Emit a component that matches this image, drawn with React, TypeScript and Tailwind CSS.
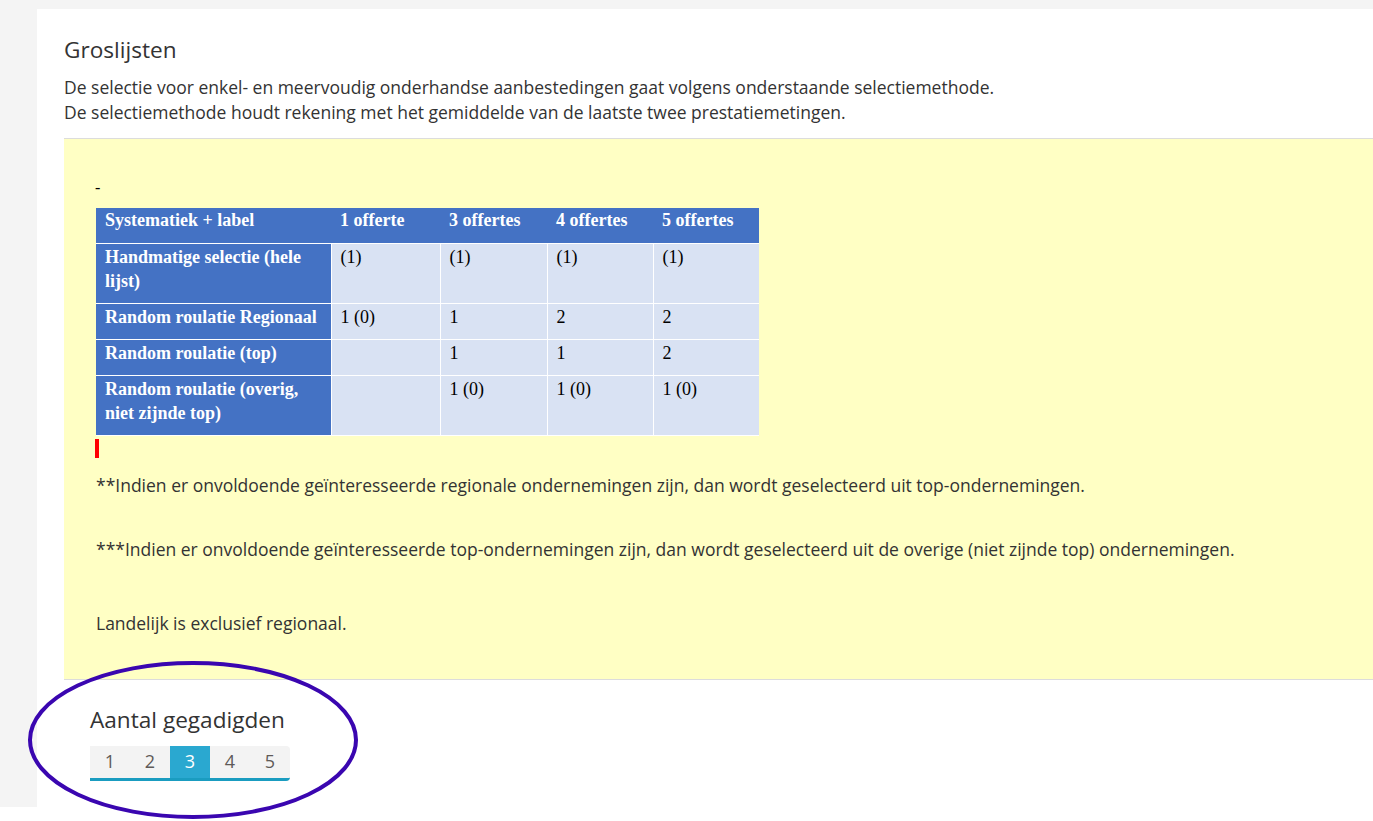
import React from "react";

const rows: { label: string; cells: string[]; tall?: boolean }[] = [
  { label: "Handmatige selectie (hele lijst)", cells: ["(1)", "(1)", "(1)", "(1)"], tall: true },
  { label: "Random roulatie Regionaal", cells: ["1 (0)", "1", "2", "2"] },
  { label: "Random roulatie (top)", cells: ["", "1", "1", "2"] },
  { label: "Random roulatie (overig, niet zijnde top)", cells: ["", "1 (0)", "1 (0)", "1 (0)"], tall: true },
];

export default function App() {
  return (
    <div className="relative w-[1373px] h-[821px] overflow-hidden bg-white font-['Open_Sans',sans-serif]">
      <div className="h-[807px] bg-[#f4f4f4] pt-[9px] pl-[37px] flex">
        <div className="flex-1 bg-white pl-[27px] pt-[26px]">
          <h1 className="text-[22.6px] leading-[30px] text-[#333] font-normal">Groslijsten</h1>
          <p className="mt-[10px] text-[17.5px] leading-[25px] text-[#333]">
            De selectie voor enkel- en meervoudig onderhandse aanbestedingen gaat volgens onderstaande selectiemethode.
            <br />
            De selectiemethode houdt rekening met het gemiddelde van de laatste twee prestatiemetingen.
          </p>
          <div className="mt-[13px] border-y border-[#dcdcdc] bg-[#ffffc4] pl-[32px] pt-[37px] pb-[44px] text-[#333]">
            <div className="text-[16px] leading-[24px] text-black font-['Liberation_Serif',serif] -ml-[1px]">-</div>
            <table className="mt-[8px] table-fixed border-collapse font-['Liberation_Serif',serif] text-[18px] leading-[24px] w-[663px]">
              <colgroup>
                <col className="w-[235px]" />
                <col className="w-[109px]" />
                <col className="w-[107px]" />
                <col className="w-[106px]" />
                <col className="w-[106px]" />
              </colgroup>
              <thead>
                <tr className="h-[35px]">
                  {["Systematiek + label", "1 offerte", "3 offertes", "4 offertes", "5 offertes"].map((h) => (
                    <th
                      key={h}
                      className="bg-[#4472c4] text-white font-bold text-left align-top pl-[9px] pt-[0px] pb-[10px] border-b border-white"
                    >
                      {h}
                    </th>
                  ))}
                </tr>
              </thead>
              <tbody>
                {rows.map((r) => (
                  <tr key={r.label} className={r.tall ? "h-[60px]" : "h-[36px]"}>
                    <td className="bg-[#4472c4] text-white font-bold align-top pl-[9px] pr-[4px] pt-[1px] border border-white border-l-0">
                      {r.label}
                    </td>
                    {r.cells.map((c, i) => (
                      <td
                        key={i}
                        className="bg-[#d9e2f3] text-black align-top pl-[9px] pt-[1px] border border-white last:border-r-0"
                      >
                        {c}
                      </td>
                    ))}
                  </tr>
                ))}
              </tbody>
            </table>
            <div className="mt-[3px] -ml-[1px] h-[19px] w-[4px] bg-[#ff0000]" />
            <p className="mt-[15px] text-[17.5px] leading-[24px]">
              **Indien er onvoldoende geïnteresseerde regionale ondernemingen zijn, dan wordt geselecteerd uit top-ondernemingen.
            </p>
            <p className="mt-[40px] text-[17.5px] leading-[24px]">
              ***Indien er onvoldoende geïnteresseerde top-ondernemingen zijn, dan wordt geselecteerd uit de overige (niet zijnde top) ondernemingen.
            </p>
            <p className="mt-[50px] text-[17.5px] leading-[24px]">Landelijk is exclusief regionaal.</p>
          </div>
          <div className="pl-[26px] pt-[25px]">
            <h2 className="text-[22.6px] leading-[30px] text-[#333] font-normal">Aantal gegadigden</h2>
            <div className="mt-[11px] flex w-[200px] border-b-[3px] border-[#1a9cc0] rounded-br-[4px] overflow-hidden">
              {[1, 2, 3, 4, 5].map((n) => (
                <div
                  key={n}
                  className={
                    n === 3
                      ? "w-[40px] h-[32px] flex items-center justify-center text-[18px] bg-[#2aa8d0] text-white"
                      : n === 5
                      ? "w-[40px] h-[32px] flex items-center justify-center text-[18px] bg-[#f3f3f3] text-[#5e5a58] rounded-tr-[4px]"
                      : "w-[40px] h-[32px] flex items-center justify-center text-[18px] bg-[#f3f3f3] text-[#5e5a58]"
                  }
                >
                  {n}
                </div>
              ))}
            </div>
          </div>
        </div>
      </div>
      <svg className="absolute left-0 top-0 pointer-events-none" width="1373" height="821">
        <ellipse cx="193" cy="740" rx="163" ry="77" fill="none" stroke="#3a06b0" strokeWidth="4" />
      </svg>
    </div>
  );
}
